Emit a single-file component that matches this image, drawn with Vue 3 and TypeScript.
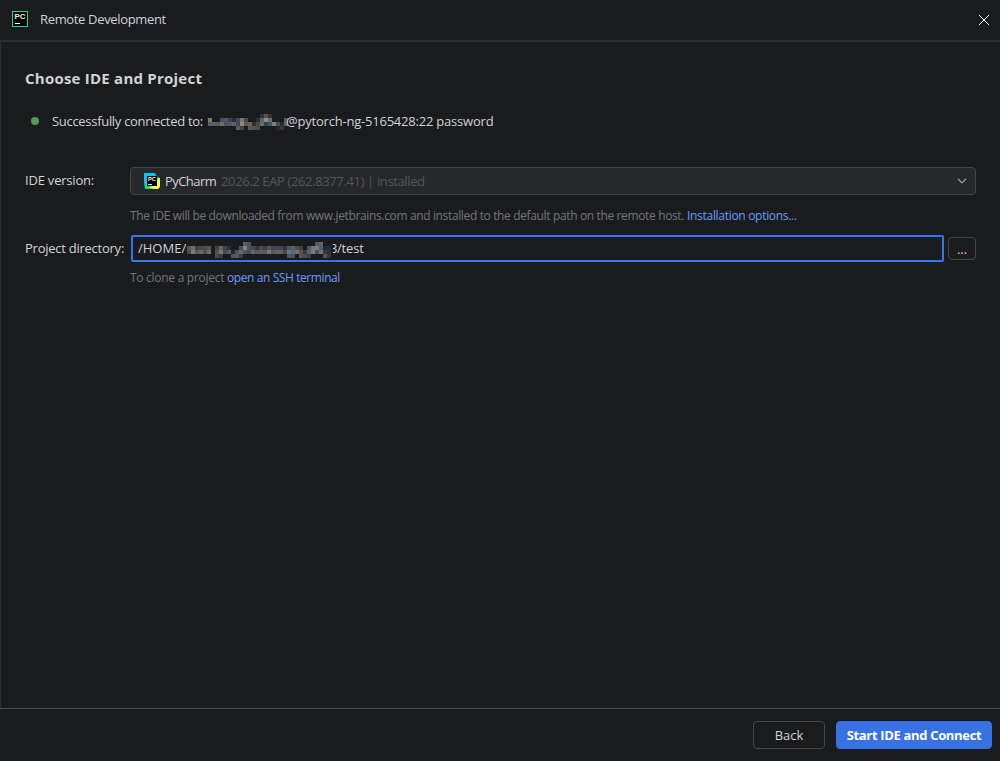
<script setup lang="ts">
interface Cell { x: number; y: number; c: string }

// Each row lists "column:colour" entries of a censor mosaic with 4px blocks.
function cells(rows: string[]): Cell[] {
  return rows.flatMap((row, r) =>
    row.split(' ').filter(Boolean).map((entry) => {
      const [col, c] = entry.split(':')
      return { x: Number(col) * 4, y: r * 4, c: '#' + c }
    }),
  )
}

const userMosaic = cells([
  '13:2b3640 14:5b5048 15:38302c',
  '0:77776b 3:4c4f57 4:55565a 5:3c444f 6:28303a 7:434b55 8:6c7982 9:454a50 12:2c3038 13:57636c 14:8b8d87 15:6a6a68 19:5a5a5e',
  '0:5e625a 1:5a6068 2:55585c 3:6a6d70 4:55504a 5:50586a 6:5a626c 7:3c4858 8:8a8880 9:73523c 10:6a6058 11:30343a 12:504840 13:706860 14:3a4048 15:3c5878 16:7a8088 17:4c4c4c 18:2c2c30 19:606068',
  '7:5a5f68 8:45443e 10:555960 11:50545c 12:405060 17:28282a 18:403830',
])

const pathMosaic = cells([
  '14:45627a 15:46525e 32:4a5a66 33:5c646a',
  '0:55585a 1:6e706a 2:3c4248 3:474a50 4:504a48 5:54585c 7:44403e 8:68625c 9:3c4450 10:33302e 13:485058 14:80847e 15:4a525c 16:50483e 17:30353c 18:564840 19:34404c 20:58544e 21:3c4550 22:454850 23:424448 24:30363e 25:50565c 26:58626e 27:4a4c50 28:3c4046 30:4c5660 31:70787c 32:7c7c76 33:515b68 34:1e2734 35:24303e',
  '0:484a4c 1:7c7c74 2:605c58 3:65686a 4:54524e 5:6c6c68 7:58524e 8:7a716a 9:3e4c5a 10:645a50 11:24282c 12:4c5258 13:65686c 14:5c544c 15:3a4e62 16:6c645c 17:505860 18:6b5546 19:4c5c6a 20:7a766e 21:55585c 22:685f56 23:5c6068 24:4a4848 25:6d757c 26:5a6675 27:707070 28:5c5048 29:343a42 30:5b6267 31:777b7b 32:3d5265 33:6f7070 34:353b45 35:28313e',
  '7:44484c 8:383c40 11:50555b 12:555960 13:35404a 25:4b5564 26:4c515a 28:515359 29:4a4d52 30:3a4048 34:50535a 35:303640',
])
</script>

<template>
  <div class="window">
    <header class="titlebar">
      <svg class="logo" width="16" height="16" viewBox="0 0 16 16">
        <rect x=".5" y=".5" width="15" height="15" fill="#000" stroke="#21d789" />
        <text class="pc" x="2.5" y="8.2" font-size="7.6" textLength="11" lengthAdjust="spacingAndGlyphs">PC</text>
        <rect x="3" y="12" width="5" height="1" fill="#fff" />
      </svg>
      <span class="title">Remote Development</span>
      <svg class="close" width="10" height="10" viewBox="0 0 10 10">
        <path d="M0 0L10 10M10 0L0 10" stroke="#fff" stroke-width="1" />
      </svg>
    </header>

    <main class="content">
      <h1>Choose IDE and Project</h1>
      <div class="status">
        <i class="dot"></i>
        <span class="connected">Successfully connected to:</span>
        <svg class="user" width="80" height="16" shape-rendering="crispEdges">
          <rect v-for="(p, i) in userMosaic" :key="i" :x="p.x" :y="p.y" width="4" height="4" :fill="p.c" />
        </svg>
        <span class="host">@pytorch-ng-5165428:22 password</span>
      </div>

      <div class="row version">
        <label class="l-version">IDE version:</label>
        <div class="select">
          <svg class="ide" width="16" height="16" viewBox="0 0 16 16">
            <defs>
              <linearGradient id="edge" x1="0" y1="0" x2="1" y2="1">
                <stop offset="0" stop-color="#07c3f2" />
                <stop offset=".45" stop-color="#0bc8e8" />
                <stop offset=".56" stop-color="#21d789" />
                <stop offset=".68" stop-color="#fcf84a" />
              </linearGradient>
            </defs>
            <path d="M0 0H11L13 4L16 5V14L14 16H2L1 12L0 8Z" fill="url(#edge)" />
            <path d="M0 9L3 11V13L10 16H1Z" fill="#21d789" />
            <rect x="3" y="3" width="10" height="10" fill="#000" />
            <text class="pc" x="4" y="8" font-size="5.5" textLength="8" lengthAdjust="spacingAndGlyphs">PC</text>
            <rect x="4" y="11" width="4" height="1" fill="#ddd" />
          </svg>
          <span class="name">PyCharm</span>
          <span class="build">2026.2 EAP (262.8377.41) | installed</span>
          <svg class="chevron" width="10" height="6" viewBox="0 0 10 6">
            <path d="M1 .8L5 4.8L9 .8" fill="none" stroke="#b4b8bf" stroke-width="1.1" />
          </svg>
        </div>
      </div>
      <p class="hint hint-ide"><span class="h1t">The IDE will be downloaded from www.jetbrains.com and installed to the default path on the remote host.</span><a class="a1">Installation options...</a></p>

      <div class="row directory">
        <label class="l-dir">Project directory:</label>
        <div class="input">
          <span class="home">/HOME/</span>
          <svg class="path" width="148" height="16" shape-rendering="crispEdges">
            <rect v-for="(p, i) in pathMosaic" :key="i" :x="p.x" :y="p.y" width="4" height="4" :fill="p.c" />
          </svg>
          <span class="tail"><span class="digit">3</span>/test</span>
        </div>
        <button class="browse"><span>...</span></button>
      </div>
      <p class="hint hint-ssh"><span class="h2t">To clone a project</span><a class="a2">open an SSH terminal</a></p>
    </main>

    <footer class="footer">
      <button class="back"><span>Back</span></button>
      <button class="start"><span>Start IDE and Connect</span></button>
    </footer>
  </div>
</template>

<style>
body { margin: 0; background: #1a1b1d; }
</style>

<style scoped>
* { box-sizing: border-box; }
.window {
  width: 1000px; height: 761px; display: flex; flex-direction: column;
  background: #1a1b1d; color: #d1d3d9; overflow: hidden;
  font: 13px/18px "Open Sans", "Noto Sans", sans-serif; white-space: nowrap;
}
.titlebar { height: 42px; flex: none; display: flex; align-items: center; padding: 0 11px 2px 12px; border-bottom: 1px solid #2f3033; box-shadow: inset 0 -1px #292a2d; }
.logo { margin-top: -1px; }
.pc { font-family: "Liberation Sans", sans-serif; font-weight: 700; fill: #f0f0f0; }
.title { margin: -1px 0 0 12px; letter-spacing: -.34px; }
.close { margin-left: auto; }
.content { flex: 1; border-left: 1px solid #2d2e31; padding: 26px 24px 0; }
h1 { margin: 0; font-size: 15px; line-height: 20px; font-weight: 700; letter-spacing: .23px; }
.status { display: flex; align-items: center; height: 18px; margin-top: 24px; padding-left: 6px; }
.dot { width: 8px; height: 8px; border-radius: 50%; background: #4f9e58; }
.connected { width: 156px; margin-left: 13px; letter-spacing: -.3px; }
.user { flex: none; margin-top: 2px; }
.host { margin-left: -2px; letter-spacing: -.21px; }
.row { display: flex; align-items: center; }
.row label { width: 105px; flex: none; }
.l-version { letter-spacing: -.2px; margin-top: -2px; }
.l-dir { letter-spacing: -.25px; margin-top: -1px; }
.version { margin-top: 37px; height: 28px; }
.select { flex: 1; height: 28px; display: flex; align-items: center; border: 1px solid #43454a; border-radius: 4px; background: #27282b; padding: 0 8px 0 13px; }
.name { width: 56px; margin-left: 5px; letter-spacing: -.55px; }
.build { color: #54565b; letter-spacing: -.37px; }
.chevron { margin-left: auto; }
.hint { display: flex; margin: 0 0 0 105px; font-size: 12px; color: #74767b; }
.hint a { color: #6b9bfa; }
.hint-ide { margin-top: 12px; }
.h1t { width: 557px; letter-spacing: -.36px; }
.a1 { letter-spacing: -.3px; }
.h2t { width: 97px; letter-spacing: -.28px; }
.a2 { letter-spacing: -.41px; }
.directory { margin-top: 10px; height: 27px; }
.input { width: 813px; height: 27px; margin-left: 1px; display: flex; align-items: center; border: 2px solid #3574f0; border-radius: 2px; padding-left: 5px; }
.home { width: 49px; margin-top: -1px; }
.tail { margin-top: -1px; letter-spacing: -.15px; }
.path { flex: none; position: relative; z-index: 1; margin-top: 3px; }
.digit { display: inline-block; width: 7px; margin-left: -5px; clip-path: inset(0 0 0 3px); }
button { font: inherit; color: inherit; background: none; border: 1px solid #43454a; border-radius: 4px; padding: 0; }
.browse { width: 28px; height: 23px; margin-left: 4px; line-height: 20px; }
.hint-ssh { margin-top: 7px; }
.footer { height: 53px; flex: none; display: flex; justify-content: flex-end; gap: 11px; padding: 12px 8px 0; border-top: 1px solid #4a4b4e; }
.back { width: 72px; height: 28px; }
.start { width: 156px; height: 28px; background: #3871e1; border-color: #3871e1; color: #fff; font-weight: 700; letter-spacing: -.33px; }
</style>
